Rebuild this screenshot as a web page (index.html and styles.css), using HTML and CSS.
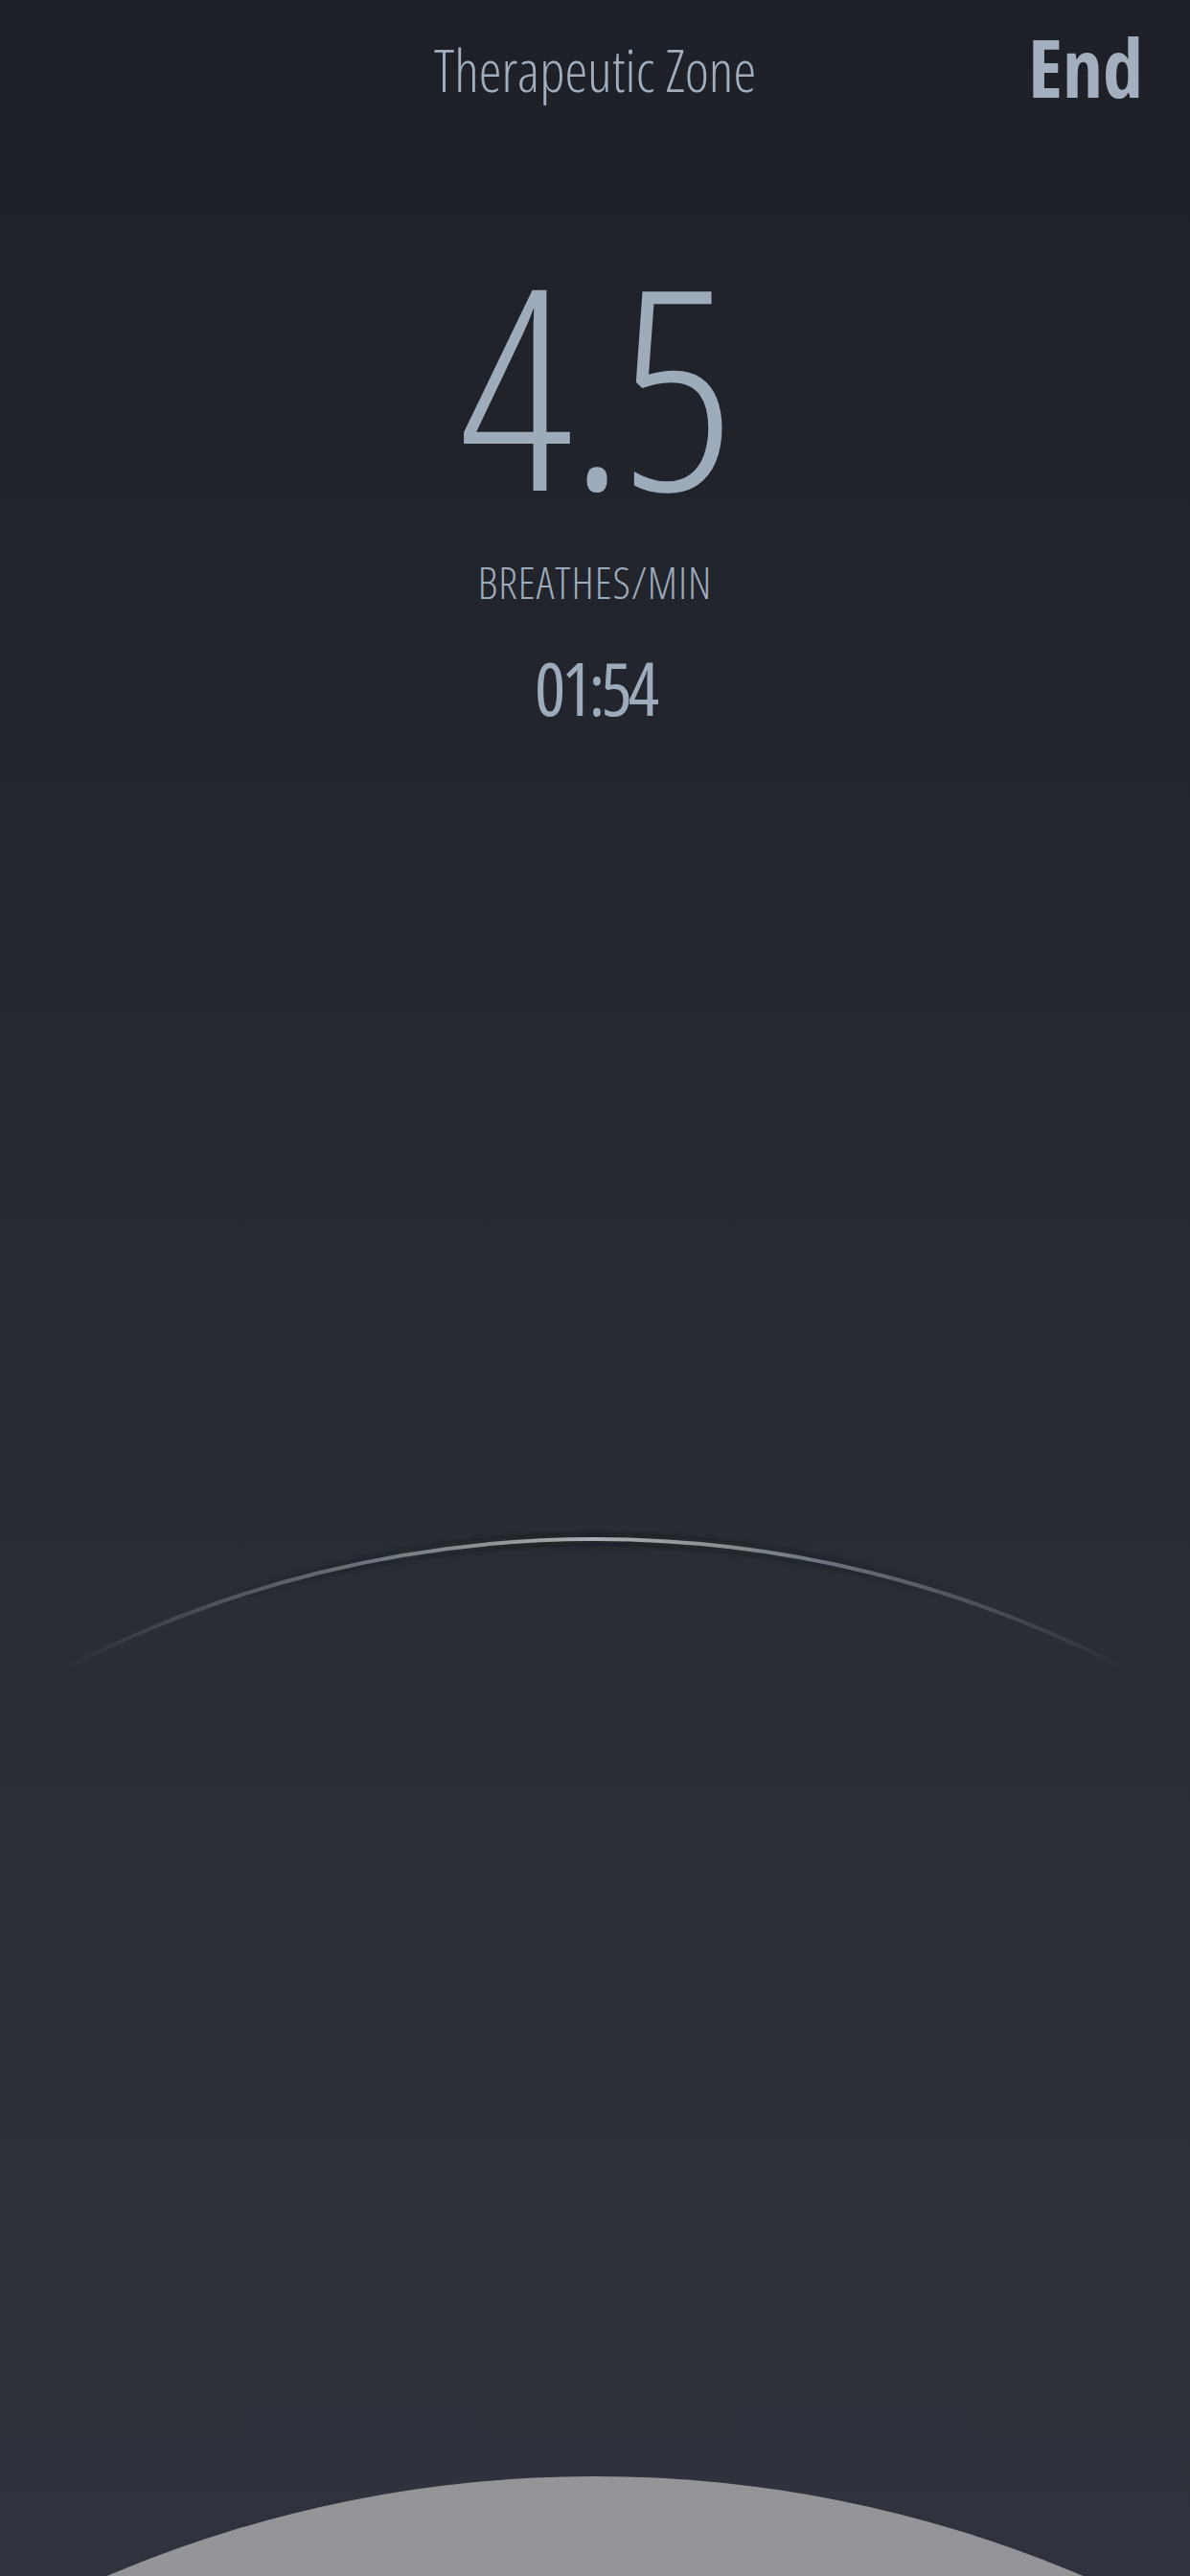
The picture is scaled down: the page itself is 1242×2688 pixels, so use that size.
FILE: index.html
```html
<!DOCTYPE html>
<html lang="en">
<head>
  <meta charset="UTF-8">
  <title>Therapeutic Zone</title>
  <link rel="stylesheet" href="styles.css">
</head>
<body>
  <div class="screen">
    <header class="topbar">
      <span></span>
      <h1 class="title">Therapeutic Zone</h1>
      <a class="end-btn" href="#">End</a>
    </header>
    <section class="readout">
      <div class="rate">4.5</div>
      <div class="unit">BREATHES/MIN</div>
      <div class="timer">01:54</div>
    </section>
    <svg class="horizon" viewBox="0 0 1242 1128" width="1242" height="1128">
      <defs>
        <linearGradient id="arcFade" x1="70" y1="0" x2="1172" y2="0" gradientUnits="userSpaceOnUse">
          <stop offset="0" stop-color="#c4c7cc" stop-opacity="0"/>
          <stop offset="0.5" stop-color="#c4c7cc" stop-opacity="0.85"/>
          <stop offset="1" stop-color="#c4c7cc" stop-opacity="0"/>
        </linearGradient>
        <linearGradient id="shadeFade" x1="70" y1="0" x2="1172" y2="0" gradientUnits="userSpaceOnUse">
          <stop offset="0.15" stop-color="#111318" stop-opacity="0"/>
          <stop offset="0.5" stop-color="#111318" stop-opacity="0.7"/>
          <stop offset="0.85" stop-color="#111318" stop-opacity="0"/>
        </linearGradient>
        <filter id="soft" x="-10%" y="-50%" width="120%" height="200%">
          <feGaussianBlur stdDeviation="3"/>
        </filter>
      </defs>
      <path class="arc-shadow" d="M 70 180 A 1200 1200 0 0 1 1172 180" stroke="url(#shadeFade)" filter="url(#soft)"/>
      <path class="arc" d="M 70 180 A 1200 1200 0 0 1 1172 180" stroke="url(#arcFade)"/>
      <circle class="pacer" cx="621" cy="2324" r="1300"/>
    </svg>
  </div>
</body>
</html>
```

FILE: styles.css
```css
html, body {
  margin: 0;
  padding: 0;
}
body {
  width: 1242px;
  height: 2688px;
  overflow: hidden;
  background: linear-gradient(to bottom, #1e2027 0%, #23262e 33%, #2a2e35 66%, #30333d 100%);
  font-family: "Open Sans", "DejaVu Sans", sans-serif;
  font-stretch: 75%;
  font-weight: 300;
  color: #9eabbb;
}
.screen {
  height: 2688px;
  display: flex;
  flex-direction: column;
}

/* top bar */
.topbar {
  display: grid;
  grid-template-columns: 1fr auto 1fr;
  align-items: start;
  padding: 0 49px 0 49px;
  height: 112px;
}
.title {
  margin: 43px 0 0 0;
  font-size: 60px;
  line-height: 1;
  font-weight: 300;
  color: #a3aebd;
}
.end-btn {
  justify-self: end;
  margin-top: 28px;
  font-size: 84px;
  line-height: 1;
  font-weight: 700;
  color: #a3afbf;
  text-decoration: none;
}

/* breathing rate */
.readout {
  display: flex;
  flex-direction: column;
  align-items: center;
}
.rate {
  font-size: 291px;
  line-height: 1;
  margin-top: 142px;
  letter-spacing: -4px;
}
.unit {
  font-size: 46px;
  line-height: 1;
  margin-top: 39px;
  letter-spacing: 1px;
}
.timer {
  font-size: 76px;
  line-height: 1;
  font-weight: 400;
  margin-top: 50px;
  letter-spacing: -4px;
}

/* breathing horizon */
.horizon {
  display: block;
  margin-top: auto;
}
.arc {
  fill: none;
  stroke-width: 4;
}
.arc-shadow {
  fill: none;
  stroke-width: 10;
}
.pacer {
  fill: #939598;
}
```
